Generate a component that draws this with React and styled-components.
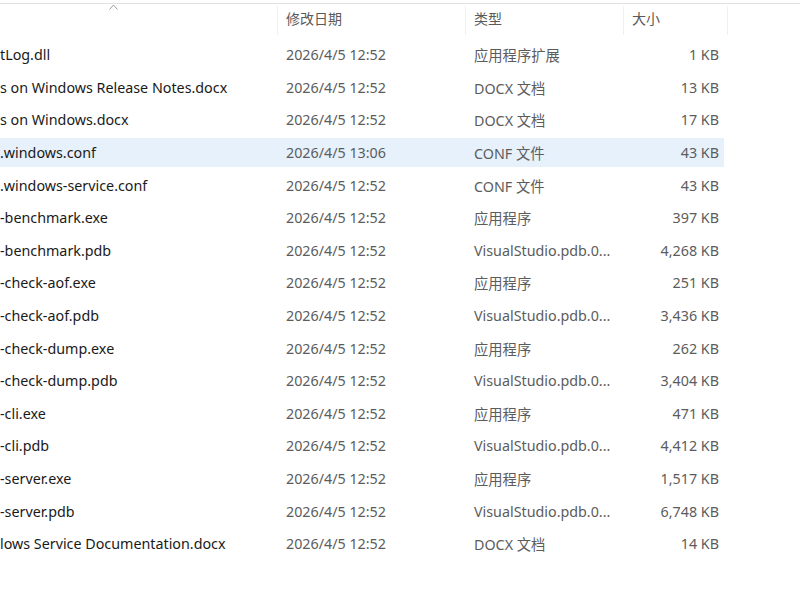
import React from "react";
import styled, { createGlobalStyle } from "styled-components";

const Global = createGlobalStyle`
  html, body {
    margin: 0;
    padding: 0;
    background: #ffffff;
    overflow: hidden;
  }
  body {
    font-family: "Noto Sans", "Noto Sans CJK SC", sans-serif;
    -webkit-font-smoothing: antialiased;
  }
`;

const Pane = styled.div`
  width: 800px;
  height: 600px;
  background: #fff;
  padding-top: 3px;
  box-sizing: border-box;
`;

const Header = styled.div`
  position: relative;
  display: grid;
  grid-template-columns: 278px 188px 158px 104px;
  height: 34px;
  border-top: 1px solid #e1e1e1;
  font-size: 14px;
  color: #5a5a5a;
`;

const HeadCell = styled.div`
  display: flex;
  align-items: center;
  padding-left: ${(p) => p.$pad || 8}px;
  padding-bottom: 6px;
  border-right: 1px solid #f0f0f0;
  margin: 2px 0 3px;
  box-sizing: border-box;
`;

const SortMark = styled.svg`
  position: absolute;
  left: 109px;
  top: 0px;
  width: 9px;
  height: 6px;
`;

const List = styled.div`
  display: flex;
  flex-direction: column;
  padding-top: 2px;
  gap: 3px;
`;

const Row = styled.div`
  display: grid;
  grid-template-columns: 278px 188px 158px 100px;
  width: 724px;
  height: 29.6px;
  align-items: center;
  font-size: 14.3px;
  background: ${(p) => (p.$selected ? "#e6f1fc" : "transparent")};
`;

const Name = styled.div`
  color: #1a1a1a;
  white-space: nowrap;
  overflow: hidden;
`;

const Cell = styled.div`
  color: #5c5c5c;
  padding-left: 8px;
  white-space: nowrap;
`;

const Size = styled.div`
  color: #5c5c5c;
  text-align: right;
  padding-right: 5px;
  white-space: nowrap;
`;

const files = [
  ["tLog.dll", "2026/4/5 12:52", "应用程序扩展", "1 KB"],
  ["s on Windows Release Notes.docx", "2026/4/5 12:52", "DOCX 文档", "13 KB"],
  ["s on Windows.docx", "2026/4/5 12:52", "DOCX 文档", "17 KB"],
  [".windows.conf", "2026/4/5 13:06", "CONF 文件", "43 KB", true],
  [".windows-service.conf", "2026/4/5 12:52", "CONF 文件", "43 KB"],
  ["-benchmark.exe", "2026/4/5 12:52", "应用程序", "397 KB"],
  ["-benchmark.pdb", "2026/4/5 12:52", "VisualStudio.pdb.0...", "4,268 KB"],
  ["-check-aof.exe", "2026/4/5 12:52", "应用程序", "251 KB"],
  ["-check-aof.pdb", "2026/4/5 12:52", "VisualStudio.pdb.0...", "3,436 KB"],
  ["-check-dump.exe", "2026/4/5 12:52", "应用程序", "262 KB"],
  ["-check-dump.pdb", "2026/4/5 12:52", "VisualStudio.pdb.0...", "3,404 KB"],
  ["-cli.exe", "2026/4/5 12:52", "应用程序", "471 KB"],
  ["-cli.pdb", "2026/4/5 12:52", "VisualStudio.pdb.0...", "4,412 KB"],
  ["-server.exe", "2026/4/5 12:52", "应用程序", "1,517 KB"],
  ["-server.pdb", "2026/4/5 12:52", "VisualStudio.pdb.0...", "6,748 KB"],
  ["lows Service Documentation.docx", "2026/4/5 12:52", "DOCX 文档", "14 KB"],
];

export default function App() {
  return (
    <>
      <Global />
      <Pane>
        <Header>
          <SortMark viewBox="0 0 9 6">
            <path d="M0.5 5.5 L4.5 1 L8.5 5.5" fill="none" stroke="#9a9a9a" strokeWidth="1" />
          </SortMark>
          <HeadCell $pad={0} />
          <HeadCell>修改日期</HeadCell>
          <HeadCell>类型</HeadCell>
          <HeadCell>大小</HeadCell>
        </Header>
        <List>
          {files.map(([name, date, type, size, sel]) => (
            <Row key={name} $selected={sel}>
              <Name>{name}</Name>
              <Cell>{date}</Cell>
              <Cell>{type}</Cell>
              <Size>{size}</Size>
            </Row>
          ))}
        </List>
      </Pane>
    </>
  );
}
